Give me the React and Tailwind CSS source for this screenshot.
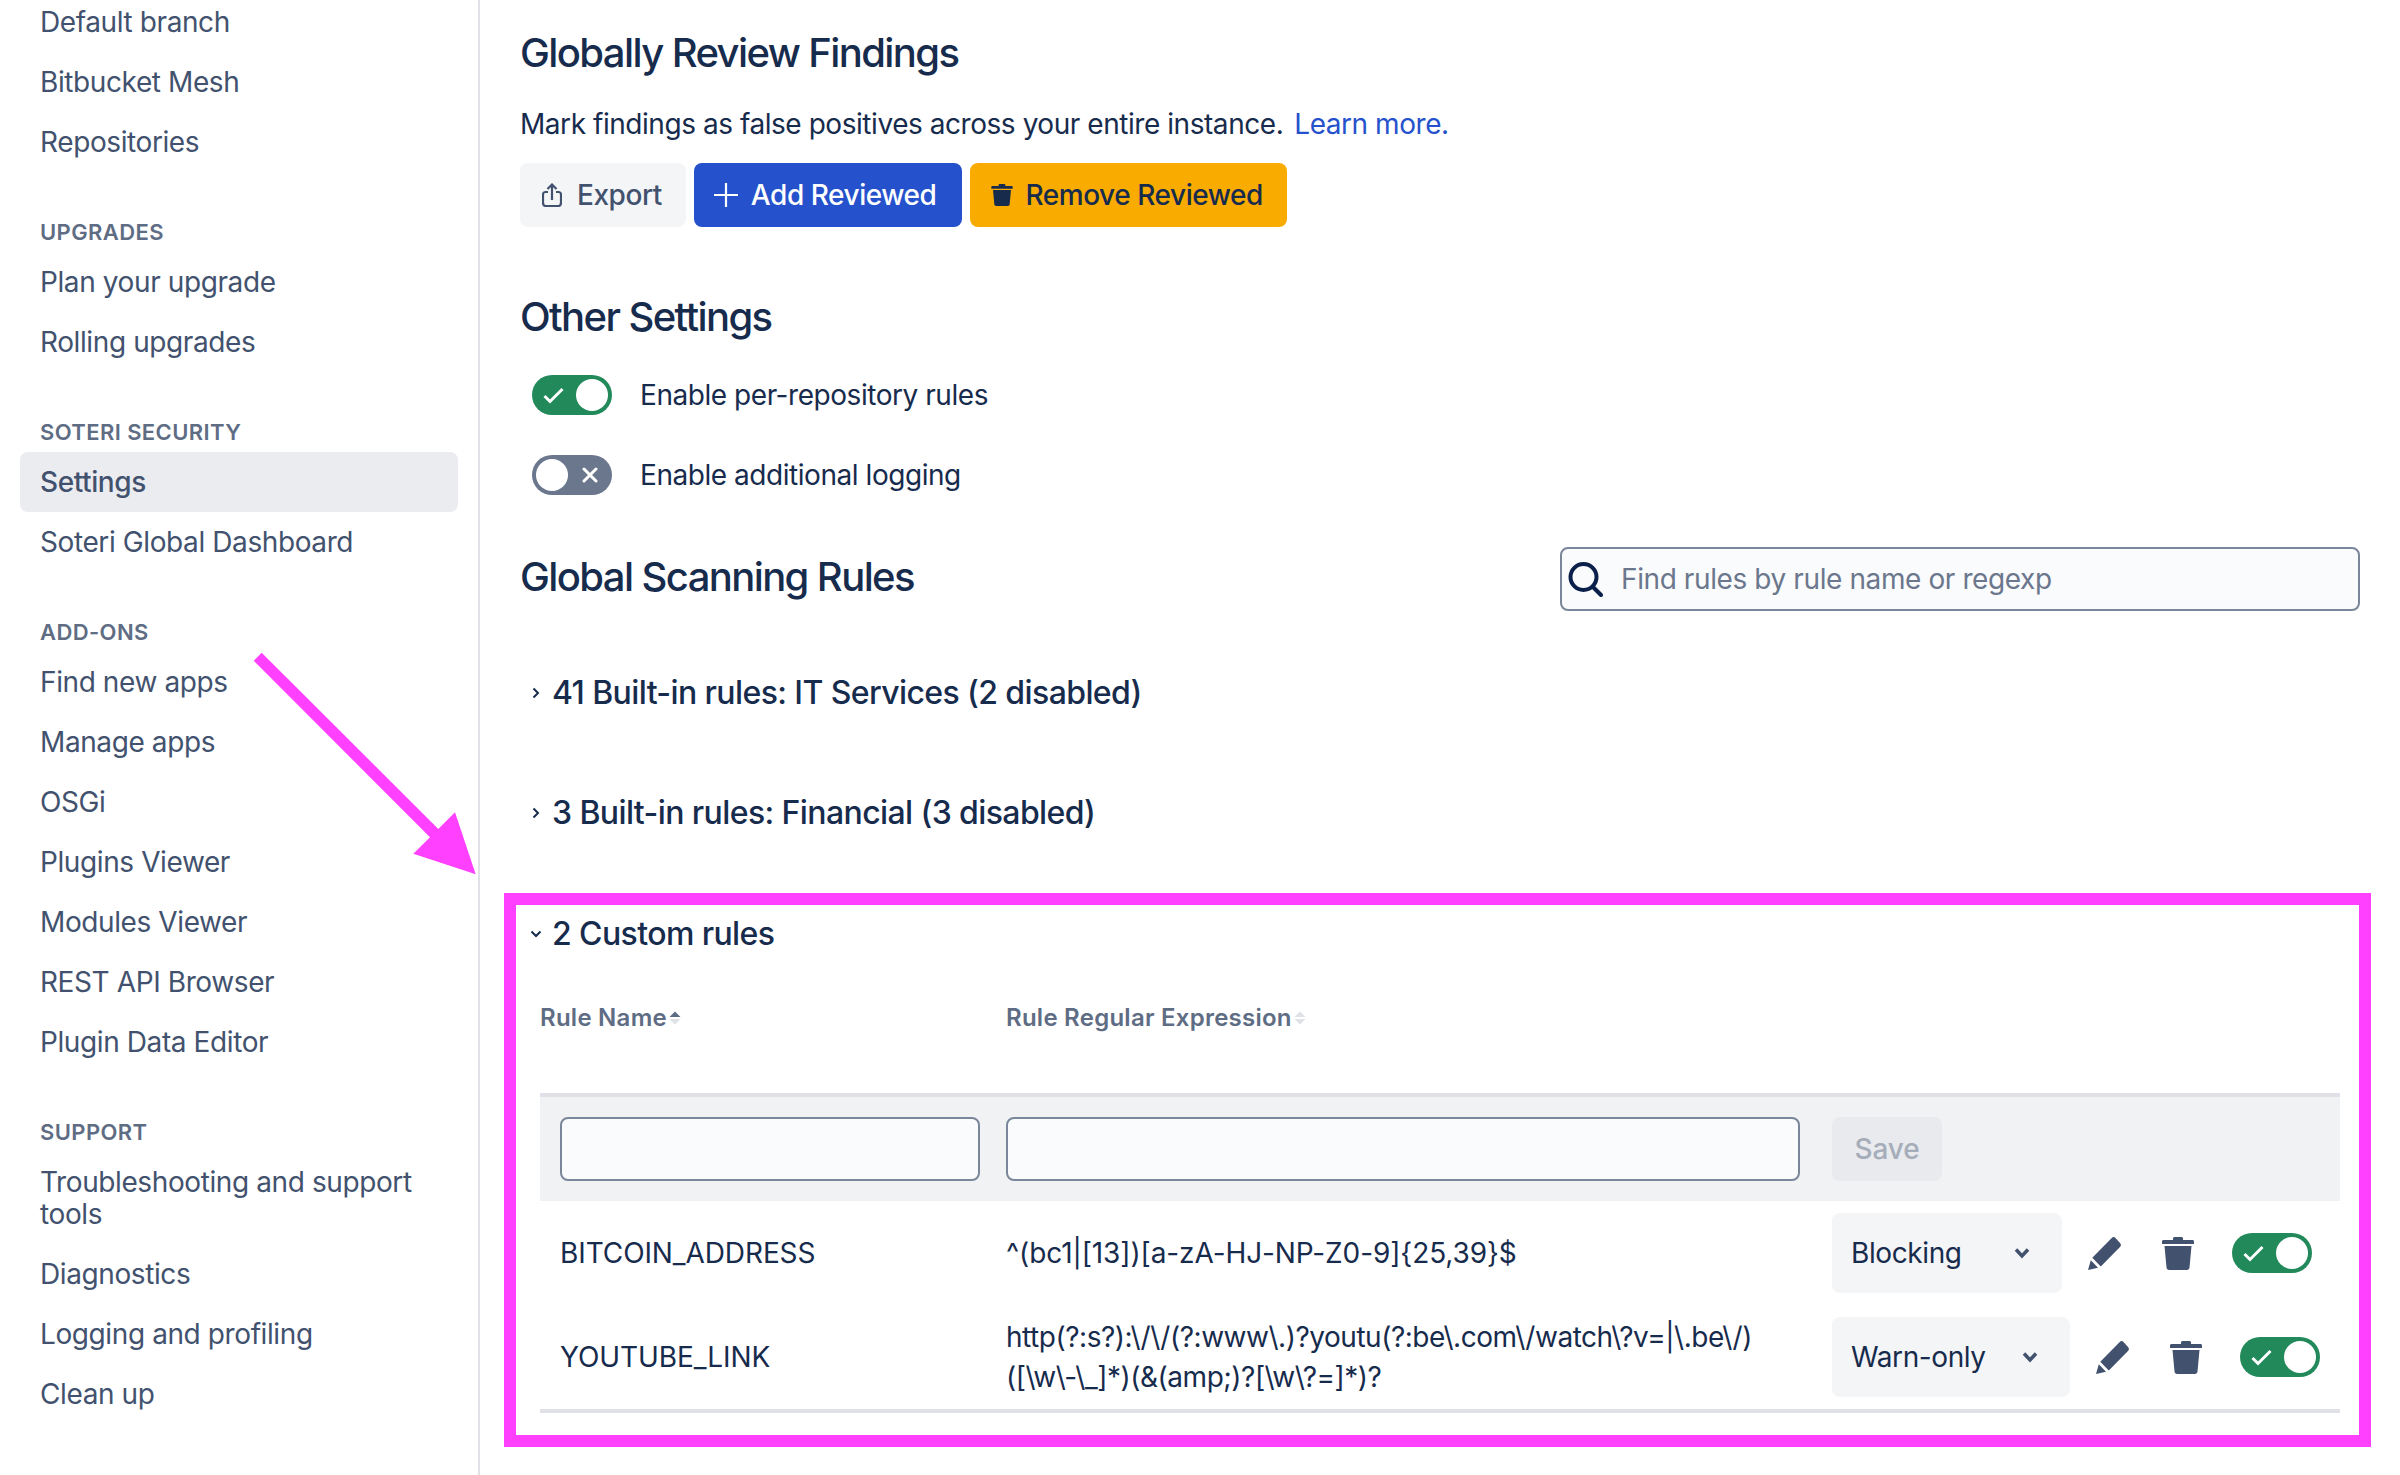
const sections = [
  { items: ['Default branch', 'Bitbucket Mesh', 'Repositories'] },
  { title: 'Upgrades', items: ['Plan your upgrade', 'Rolling upgrades'] },
  { title: 'Soteri Security', items: ['Settings', 'Soteri Global Dashboard'] },
  {
    title: 'Add-ons',
    items: ['Find new apps', 'Manage apps', 'OSGi', 'Plugins Viewer', 'Modules Viewer', 'REST API Browser', 'Plugin Data Editor'],
  },
  {
    title: 'Support',
    items: ['Troubleshooting and support tools', 'Diagnostics', 'Logging and profiling', 'Clean up'],
  },
];

function TrashIcon({ className }) {
  return (
    <svg viewBox="0 0 32 33" className={className} fill="currentColor">
      <path d="M11 1.500C11 .6 11.700 0 12.500 0h7c.8 0 1.500.6 1.500 1.500V3h9.500c.8 0 1.500.7 1.500 1.500V7H0V4.500C0 3.700.7 3 1.500 3H11z" />
      <path d="M2.500 9h27l-2 21.500c-.1 1.400-1.200 2.500-2.600 2.500H7.100c-1.400 0-2.500-1.100-2.600-2.500z" />
    </svg>
  );
}

function PencilIcon() {
  return (
    <svg viewBox="0 0 33 33" className="h-[33px] w-[33px]" fill="currentColor">
      <path d="M23.500 1.200c1.300-1.500 2.700-1.500 4-.2l4.300 4.700c1.400 1.400 1.500 2.800.2 4.200L12.800 29.500 4.300 20.800z" />
      <path d="M2.800 23.200l7.200 7.600L0 33z" />
    </svg>
  );
}

function Toggle({ on = true }) {
  return (
    <div
      className={`flex h-10 w-20 shrink-0 items-center justify-between rounded-full px-1 ${on ? 'bg-[#22895a]' : 'bg-[#6b778c]'}`}
    >
      {on ? (
        <>
          <svg viewBox="0 0 21 17" className="ml-[7px] h-[17px] w-[21px]" fill="none" stroke="white" strokeWidth="3">
            <path d="M1.500 9l5.500 5.500L19.500 2" />
          </svg>
          <span className="h-8 w-8 rounded-full bg-white" />
        </>
      ) : (
        <>
          <span className="h-8 w-8 rounded-full bg-white" />
          <svg viewBox="0 0 16 16" className="mr-[10px] h-4 w-4" fill="none" stroke="white" strokeWidth="3" strokeLinecap="round">
            <path d="M2 2l12 12M14 2L2 14" />
          </svg>
        </>
      )}
    </div>
  );
}

function Chevron({ down }) {
  return (
    <svg viewBox="0 0 12 12" className="ml-[10px] h-3 w-3 shrink-0 text-[#172b4d]" fill="none" stroke="currentColor" strokeWidth="2">
      {down ? <path d="M1.500 3.500L6 8l4.500-4.500" /> : <path d="M3.500 1.500L8 6l-4.500 4.500" />}
    </svg>
  );
}

function SortCaret({ active }) {
  return (
    <svg viewBox="0 0 12 16" className="ml-[2px] h-4 w-3">
      <path d="M6 1.500l5.500 5.500H.5z" fill={active ? '#5e6c84' : '#dfe1e6'} />
      <path d="M6 14.500L11.500 9H.5z" fill="#dfe1e6" />
    </svg>
  );
}

function AccordionRow({ label, down, className = '' }) {
  return (
    <div className={`flex h-[60px] items-center text-[32px] font-medium tracking-[-0.6px] text-[#172b4d] ${className}`}>
      <Chevron down={down} />
      <span className="ml-[10px]">{label}</span>
    </div>
  );
}

function RuleActions({ mode, selectWidth }) {
  return (
    <div className="flex items-center">
      <div className={`flex h-20 items-center justify-between rounded-lg bg-[#f4f5f7] pl-[19px] pr-8 text-[28px] tracking-[-0.4px] text-[#172b4d] ${selectWidth}`}>
        {mode}
        <svg viewBox="0 0 16 12" className="h-3 w-4 text-[#42526e]" fill="none" stroke="currentColor" strokeWidth="3.500">
          <path d="M2 2.500l6 6.500 6-6.500" />
        </svg>
      </div>
      <button className="ml-[18px] flex w-12 justify-center text-[#42526e]">
        <PencilIcon />
      </button>
      <button className="ml-[26px] flex w-12 justify-center text-[#42526e]">
        <TrashIcon className="h-[33px] w-8" />
      </button>
      <div className="ml-[30px]">
        <Toggle />
      </div>
    </div>
  );
}

function Sidebar() {
  return (
    <aside className="w-[480px] shrink-0 border-r-2 border-[#dfe1e6] px-5">
      <nav className="-mt-2">
        {sections.map((section, i) => (
          <div key={i} className={section.title ? 'mt-10' : ''}>
            {section.title && (
              <h3 className="flex h-10 items-center pl-5 text-[22px] font-semibold uppercase tracking-[0.4px] text-[#5e6c84]">
                {section.title}
              </h3>
            )}
            {section.items.map((item) => (
              <a
                key={item}
                className={`flex items-center rounded-lg px-5 text-[28px] leading-8 tracking-[-0.4px] ${item.length > 30 ? 'py-[14px]' : 'h-[60px]'} ${item === 'Settings' ? 'bg-[#ebecf0] font-medium text-[#42526e]' : 'text-[#42526e]'}`}
              >
                {item}
              </a>
            ))}
          </div>
        ))}
      </nav>
    </aside>
  );
}

export default function App() {
  return (
    <div className="relative flex h-[1475px] w-[2400px] overflow-hidden bg-white font-['Inter',sans-serif] text-[#172b4d]">
      <Sidebar />

      <main className="w-[1880px] pl-10 pt-[25px]">
        <h2 className="flex h-14 items-center text-[40px] font-medium tracking-[-1.6px]">Globally Review Findings</h2>
        <p className="mt-[23px] flex h-10 items-center text-[28px] tracking-[-0.45px]">
          Mark findings as false positives across your entire instance.
          <a className="ml-[11px] text-[#2552cc]">Learn more.</a>
        </p>

        <div className="mt-[19px] flex gap-2 text-[28px] font-medium tracking-[-0.45px]">
          <button className="flex h-16 items-center rounded-lg bg-[#f4f5f7] pl-[22px] pr-6 text-[#42526e]">
            <svg viewBox="0 0 20 24" className="h-6 w-5" fill="none" stroke="currentColor" strokeWidth="2.200">
              <path d="M6 9H3.500C2.100 9 1 10.100 1 11.500v8C1 21.900 2.100 23 3.500 23h13c1.400 0 2.500-1.100 2.500-3.500v-8C19 10.100 17.900 9 16.500 9H14" />
              <path d="M10 17V2M5.500 6L10 1.500 14.500 6" />
            </svg>
            <span className="ml-[15px]">Export</span>
          </button>
          <button className="flex h-16 items-center rounded-lg bg-[#2552cc] pl-5 pr-[26px] text-white">
            <svg viewBox="0 0 24 24" className="h-6 w-6" fill="none" stroke="currentColor" strokeWidth="2.200">
              <path d="M12 0v24M0 12h24" />
            </svg>
            <span className="ml-[13px]">Add Reviewed</span>
          </button>
          <button className="flex h-16 items-center rounded-lg bg-[#faab00] pl-[21px] pr-6 text-[#172b4d]">
            <TrashIcon className="h-[22px] w-[22px]" />
            <span className="ml-[12px]">Remove Reviewed</span>
          </button>
        </div>

        <h2 className="mt-[62px] flex h-14 items-center text-[40px] font-medium tracking-[-1.6px]">Other Settings</h2>

        <div className="mt-[30px] flex flex-col gap-10 pl-3 text-[28px] tracking-[-0.45px]">
          <label className="flex h-10 items-center gap-7">
            <Toggle />
            Enable per-repository rules
          </label>
          <label className="flex h-10 items-center gap-7">
            <Toggle on={false} />
            Enable additional logging
          </label>
        </div>

        <div className="mt-[52px] flex h-16 items-center justify-between">
          <h2 className="-mt-1 text-[40px] font-medium tracking-[-1.6px]">Global Scanning Rules</h2>
          <div className="flex h-16 w-[800px] items-center rounded-lg border-2 border-[#7a869a] bg-[#fafbfc] pl-[6px]">
            <svg viewBox="0 0 35 35" className="h-[35px] w-[35px] shrink-0 text-[#0b1f4b]" fill="none" stroke="currentColor" strokeWidth="4" strokeLinecap="round">
              <circle cx="15.500" cy="15" r="13" />
              <path d="M25 25L33 33" />
            </svg>
            <input
              className="ml-[18px] w-full bg-transparent text-[28px] tracking-[-0.4px] outline-none placeholder:text-[#6b778c]"
              placeholder="Find rules by rule name or regexp"
            />
          </div>
        </div>

        <AccordionRow className="mt-[52px]" label="41 Built-in rules: IT Services (2 disabled)" />
        <AccordionRow className="mt-[60px]" label="3 Built-in rules: Financial (3 disabled)" />
        <AccordionRow className="mt-[61px]" label="2 Custom rules" down />

        <div className="ml-5 mt-[34px] w-[1800px]">
          <div className="grid h-10 grid-cols-[466px_1fr] items-center text-[24px] font-semibold tracking-[0.25px] text-[#5e6c84]">
            <div className="flex items-center">
              Rule Name
              <SortCaret active />
            </div>
            <div className="flex items-center">
              Rule Regular Expression
              <SortCaret />
            </div>
          </div>

          <div className="mt-[55px] grid grid-cols-[466px_826px_508px] border-y-4 border-[#dfe1e6] text-[28px] tracking-[-0.1px]">
            <div className="col-span-3 grid h-[104px] grid-cols-[466px_826px_508px] items-center bg-[#f1f2f4]">
              <div className="pl-5">
                <input className="h-16 w-[420px] rounded-lg border-2 border-[#7a869a] bg-[#fafbfc]" />
              </div>
              <input className="h-16 w-[794px] rounded-lg border-2 border-[#7a869a] bg-[#fafbfc]" />
              <div>
                <button className="flex h-16 w-[110px] items-center justify-center rounded-lg bg-[#e9eaed] font-medium text-[#a5adba]">
                  Save
                </button>
              </div>
            </div>

            <div className="flex h-[104px] items-center pl-5">BITCOIN_ADDRESS</div>
            <div className="flex h-[104px] items-center">^(bc1|[13])[a-zA-HJ-NP-Z0-9]{'{25,39}'}$</div>
            <div className="flex h-[104px] items-center">
              <RuleActions mode="Blocking" selectWidth="w-[230px]" />
            </div>

            <div className="flex h-[104px] items-center pl-5">YOUTUBE_LINK</div>
            <div className="flex h-[104px] flex-col justify-center leading-10 tracking-[-0.47px]">
              <span>{'http(?:s?):\\/\\/(?:www\\.)?youtu(?:be\\.com\\/watch\\?v=|\\.be\\/)'}</span>
              <span>{'([\\w\\-\\_]*)(&(amp;)?[\\w\\?=]*)?'}</span>
            </div>
            <div className="flex h-[104px] items-center">
              <RuleActions mode="Warn-only" selectWidth="w-[238px]" />
            </div>
          </div>
        </div>
      </main>

      {/* magenta annotation drawn over the screenshot */}
      <div className="pointer-events-none absolute left-[504px] top-[893px] h-[554px] w-[1867px] border-[12px] border-[#ff40ff]" />
      <svg className="pointer-events-none absolute left-[250px] top-[650px] h-[230px] w-[230px]" viewBox="250 650 230 230">
        <polygon
          points="261.700,652.700 438.300,829 455,812.300 475.700,874.300 413.300,853.700 430,837.300 253.700,660.700"
          fill="#ff40ff"
        />
      </svg>
    </div>
  );
}
